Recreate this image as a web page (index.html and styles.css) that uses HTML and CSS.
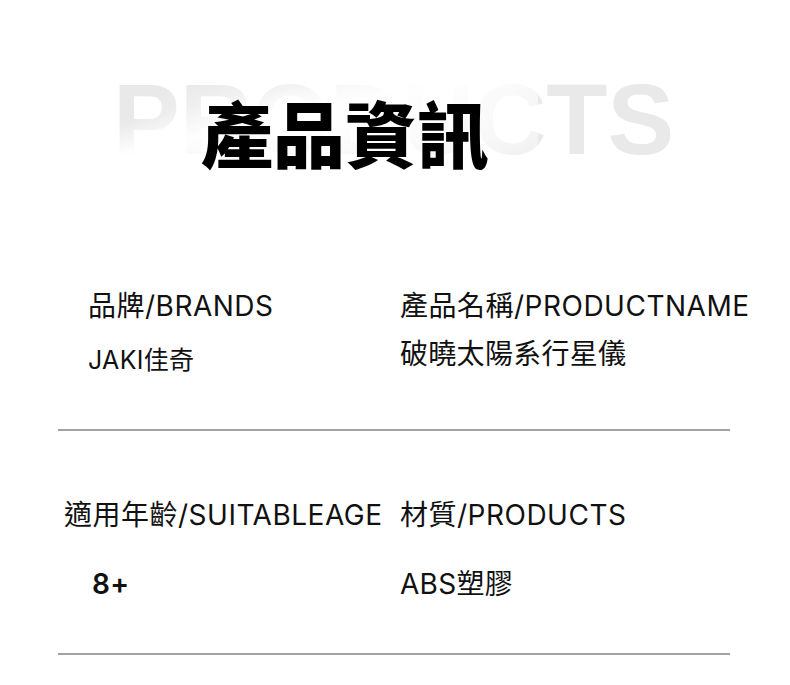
FILE: index.html
```html
<!DOCTYPE html>
<html lang="zh-Hant">
<head>
<meta charset="utf-8">
<title>產品資訊</title>
<link rel="stylesheet" href="styles.css">
</head>
<body>
<main class="page">
  <header class="hero">
    <span class="hero-bg" aria-hidden="true">PRODUCTS</span>
    <span class="hero-fade" aria-hidden="true"></span>
    <h1 class="hero-title">產品資訊</h1>
  </header>
  <section class="spec">
    <div class="spec-row">
      <div class="cell cell-first">
        <div class="label">品牌/BRANDS</div>
        <div class="value value-small">JAKI佳奇</div>
      </div>
      <div class="cell">
        <div class="label">產品名稱/PRODUCTNAME</div>
        <div class="value">破曉太陽系行星儀</div>
      </div>
    </div>
    <hr class="divider">
    <div class="spec-row spec-row-second">
      <div class="cell cell-wide">
        <div class="label">適用年齡/SUITABLEAGE</div>
        <div class="value value-bold">8+</div>
      </div>
      <div class="cell">
        <div class="label">材質/PRODUCTS</div>
        <div class="value">ABS塑膠</div>
      </div>
    </div>
    <hr class="divider">
  </section>
</main>
</body>
</html>
```
FILE: styles.css
```css
* { box-sizing: border-box; }
html, body { margin: 0; padding: 0; background: #ffffff; }
body {
  width: 790px;
  height: 685px;
  overflow: hidden;
  font-family: Inter, "Noto Sans CJK TC", "Noto Sans", sans-serif;
  color: #111111;
}
.page { width: 790px; }

.hero {
  position: relative;
  padding-top: 95px;
  padding-left: 201px;
  height: 289px;
}
.hero-bg {
  position: absolute;
  top: 69px;
  left: 113px;
  font-family: "Liberation Sans", Arial, sans-serif;
  font-weight: 700;
  font-size: 100px;
  line-height: 1;
  color: #e9e9e9;
  letter-spacing: 0;
  white-space: nowrap;
}
.hero-fade {
  position: absolute;
  top: 60px;
  left: 118px;
  width: 420px;
  height: 120px;
  background:
    linear-gradient(168deg, rgba(255,255,255,0) 30%, rgba(255,255,255,0.95) 45%, rgba(255,255,255,0.4) 62%, rgba(255,255,255,0) 80%),
    radial-gradient(ellipse 60% 55% at 62% 55%, rgba(255,255,255,0.9) 0%, rgba(255,255,255,0.55) 60%, rgba(255,255,255,0) 100%);
}
.hero-title {
  position: relative;
  margin: 0;
  font-family: "Noto Sans CJK TC", "Noto Sans CJK SC", sans-serif;
  font-weight: 900;
  font-size: 72px;
  line-height: 72px;
  color: #000000;
}

.spec {
  margin: 0 60px 0 58px;
}
.spec-row {
  display: grid;
  grid-template-columns: 342px 1fr;
}
.cell {
  display: flex;
  flex-direction: column;
}
.cell-first { padding-left: 30px; }
.cell-wide { padding-left: 6px; }

.label {
  font-size: 28px;
  line-height: 34px;
  white-space: nowrap;
  letter-spacing: 0.5px;
}
.value {
  margin-top: 14px;
  font-size: 28px;
  line-height: 34px;
  white-space: nowrap;
  letter-spacing: 0.3px;
}
.value-small {
  font-size: 25px;
  padding-top: 6px;
}
.value-bold {
  font-weight: 600;
  padding-left: 28px;
}
.spec-row-second { padding-top: 67px; }
.spec-row-second .value { margin-top: 35px; }

.divider {
  margin: 0;
  border: 0;
  height: 2px;
  background: #a3a3a3;
}
.spec-row + .divider { margin-top: 52px; }
.spec-row-second + .divider { margin-top: 52px; }
```
